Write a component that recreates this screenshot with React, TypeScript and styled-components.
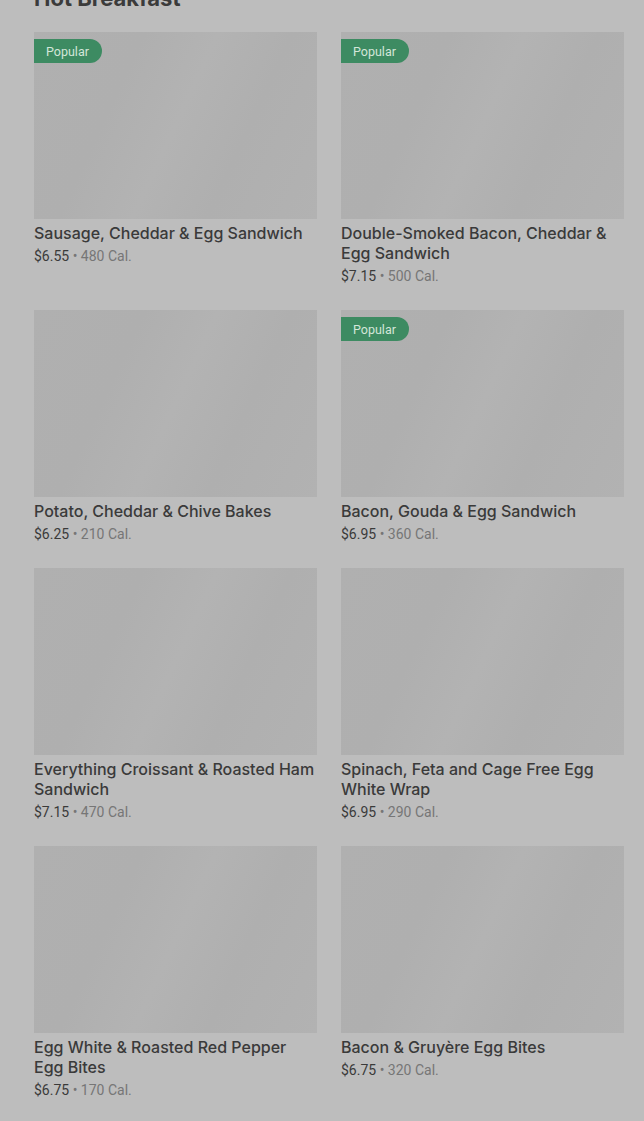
import React from 'react';
import styled, { createGlobalStyle } from 'styled-components';

const GlobalStyle = createGlobalStyle`
  html, body {
    margin: 0;
    padding: 0;
    background: #bdbdbd;
  }
  body {
    font-family: Inter, "Noto Sans", sans-serif;
    overflow: hidden;
  }
`;

interface MenuItem {
  name: string;
  price: string;
  calories: number;
  popular?: boolean;
}

const items: MenuItem[] = [
  { name: 'Sausage, Cheddar & Egg Sandwich', price: '$6.55', calories: 480, popular: true },
  { name: 'Double-Smoked Bacon, Cheddar & Egg Sandwich', price: '$7.15', calories: 500, popular: true },
  { name: 'Potato, Cheddar & Chive Bakes', price: '$6.25', calories: 210 },
  { name: 'Bacon, Gouda & Egg Sandwich', price: '$6.95', calories: 360, popular: true },
  { name: 'Everything Croissant & Roasted Ham Sandwich', price: '$7.15', calories: 470 },
  { name: 'Spinach, Feta and Cage Free Egg White Wrap', price: '$6.95', calories: 290 },
  { name: 'Egg White & Roasted Red Pepper Egg Bites', price: '$6.75', calories: 170 },
  { name: 'Bacon & Gruyère Egg Bites', price: '$6.75', calories: 320 },
];

const Page = styled.main`
  padding: 0 20px 0 34px;
`;

const Heading = styled.h2`
  margin: -16px 0 20px;
  font-size: 22px;
  line-height: 28px;
  font-weight: 700;
  color: #3b3b3b;
`;

const Grid = styled.div`
  display: grid;
  grid-template-columns: repeat(2, 1fr);
  column-gap: 24px;
  row-gap: 24px;
`;

const Card = styled.div`
  display: flex;
  flex-direction: column;
`;

const ImageBox = styled.div`
  position: relative;
  height: 187px;
  background: linear-gradient(
    115deg,
    #b0b0b0 0%,
    #afafaf 30%,
    #b3b3b3 50%,
    #afafaf 70%,
    #b2b2b2 100%
  );
`;

const Badge = styled.span`
  position: absolute;
  top: 7px;
  left: 0;
  height: 24px;
  padding: 0 13px 0 12px;
  display: flex;
  align-items: center;
  background: #3d8b62;
  color: #d3e6d9;
  font-family: Roboto, "Noto Sans", sans-serif;
  font-size: 12.5px;
  border-radius: 0 12px 12px 0;
`;

const Title = styled.div`
  margin-top: 4px;
  font-size: 16px;
  line-height: 20px;
  font-weight: 500;
  color: #3a3a3a;
`;

const Meta = styled.div`
  margin-top: 3px;
  font-family: Roboto, "Noto Sans", sans-serif;
  font-size: 14px;
  line-height: 20px;
  color: #3a3a3a;
`;

const Cal = styled.span`
  color: #767676;
`;

const App = () => {
  return (
    <Page>
      <GlobalStyle />
      <Heading>Hot Breakfast</Heading>
      <Grid>
        {items.map((item) => (
          <Card key={item.name}>
            <ImageBox>{item.popular && <Badge>Popular</Badge>}</ImageBox>
            <Title>{item.name}</Title>
            <Meta>
              {item.price} <Cal>• {item.calories} Cal.</Cal>
            </Meta>
          </Card>
        ))}
      </Grid>
    </Page>
  );
};

export default App;
